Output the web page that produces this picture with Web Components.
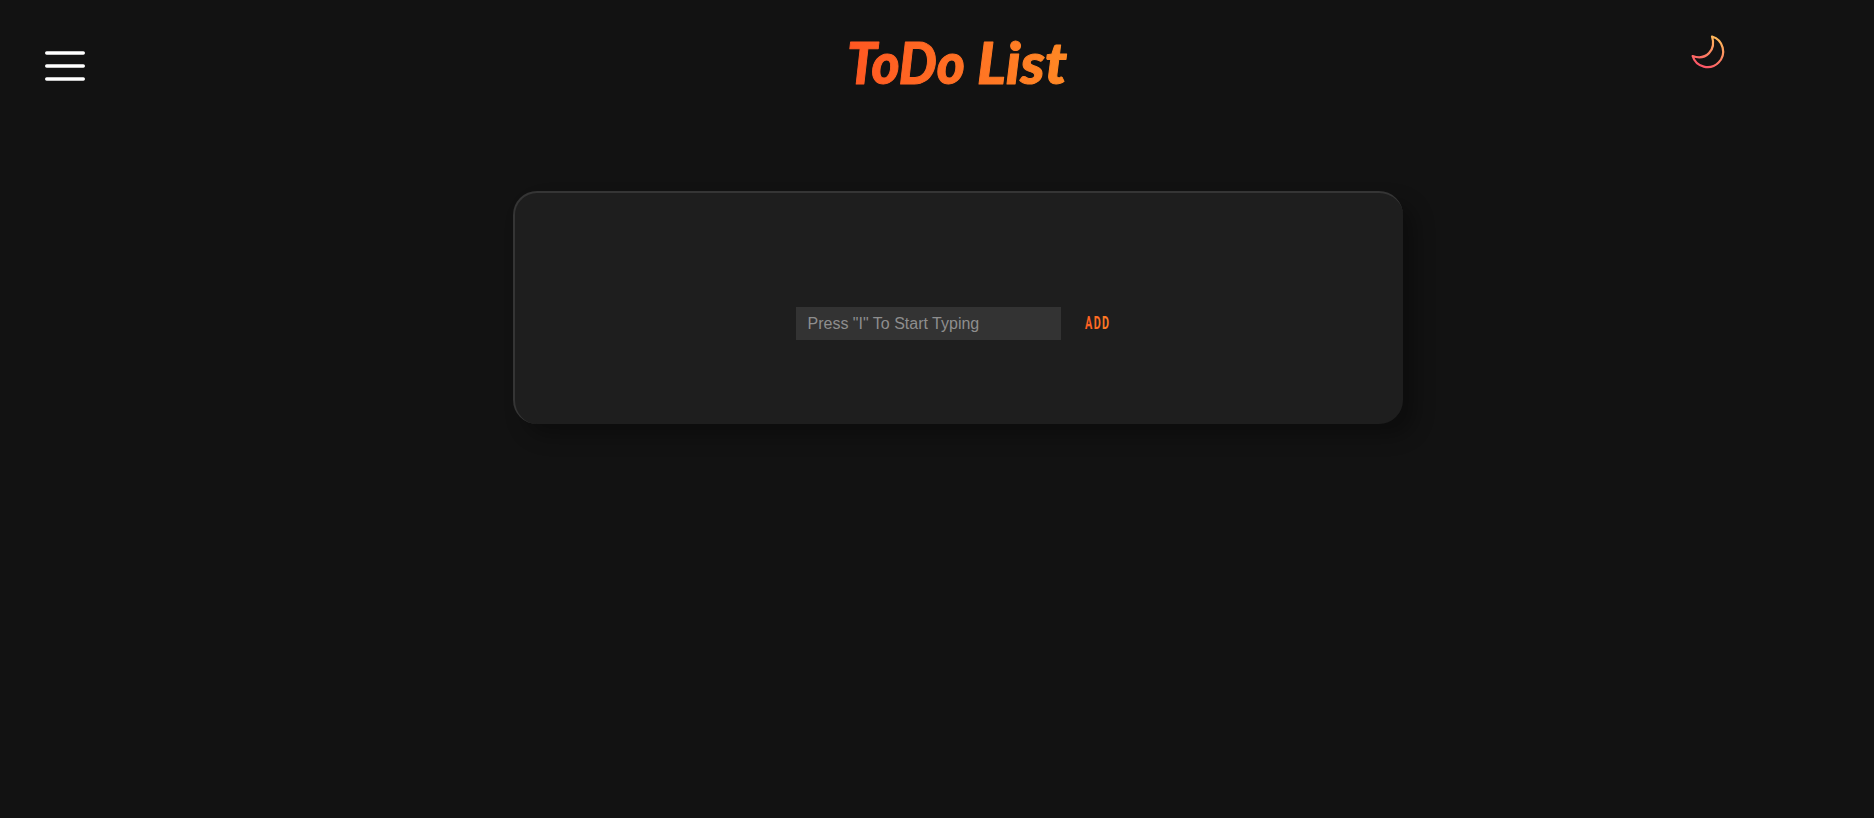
<!DOCTYPE html>
<html lang="en"><head><meta charset="utf-8"><title>ToDo List</title>
<style>html,body{margin:0;height:100%;background:#121212;overflow:hidden}</style></head>
<body><todo-app></todo-app>
<script>
const define = (name, html) => customElements.define(name, class extends HTMLElement {
  constructor() { super(); this.attachShadow({mode:'open'}).innerHTML = html; }
});
define('menu-button', `<style>:host{display:block;width:40px;height:30px}svg{display:block}</style>
<svg width="40" height="30" viewBox="0 0 40 30" stroke="#fff" stroke-width="3.4" stroke-linecap="round"><path d="M1.7 2H38.3M1.7 15H38.3M1.7 28H38.3"/></svg>`);
define('app-title', `<style>:host{display:block;width:218px;height:70px}svg{display:block;overflow:visible}text{font:italic 900 58px Lato,sans-serif;fill:url(#g);stroke:url(#g);stroke-width:1;stroke-linejoin:round}</style>
<svg width="218" height="70"><defs><linearGradient id="g" gradientUnits="userSpaceOnUse" x1="0" y1="0" x2="218" y2="0"><stop stop-color="#ff5722"/><stop offset="1" stop-color="#ff8824"/></linearGradient></defs>
<text y="51"><tspan x="-2" textLength="118" lengthAdjust="spacingAndGlyphs">ToDo</tspan><tspan x="128" textLength="90" lengthAdjust="spacingAndGlyphs">List</tspan></text></svg>`);
define('theme-toggle', `<style>:host{display:block;width:36px;height:36px}svg{display:block}</style>
<svg width="36" height="36" viewBox="0 0 36 36" fill="none"><defs><linearGradient id="m" gradientUnits="userSpaceOnUse" x1="25" y1="1" x2="10" y2="34"><stop stop-color="#ffc05a"/><stop offset="1" stop-color="#fc5068"/></linearGradient></defs>
<path d="M21 2.5A15.6 15.6 0 1 1 1.6 22C15 26.8 25.5 16 21 2.5Z" stroke="url(#m)" stroke-width="2.2" stroke-linejoin="round"/></svg>`);
define('todo-card', `<style>:host{display:flex;box-sizing:border-box;width:890px;height:233px;padding-top:114px;padding-left:281px;border:solid #353535;border-width:2px 0 0 2px;border-radius:24px;background:#1e1e1e;box-shadow:12px 12px 20px rgba(0,0,0,.3);align-items:flex-start}</style><slot></slot>`);
define('todo-input', `<style>:host{display:block}input{display:block;box-sizing:border-box;width:265px;height:33px;border:0;border-radius:0;background:#333;color:#eee;padding:0 11.5px;font:16px "Liberation Sans",Arial,sans-serif;outline:0}input::placeholder{color:#8e8e8e;opacity:1}</style><input placeholder='Press "I" To Start Typing'>`);
define('add-button', `<style>:host{display:block;margin-left:24px;height:33px}svg{display:block;overflow:visible}text{font:700 18.5px Roboto,sans-serif;fill:url(#a)}</style>
<svg width="28" height="33"><defs><linearGradient id="a" gradientUnits="userSpaceOnUse" x1="0" y1="0" x2="25" y2="0"><stop stop-color="#ff5c22"/><stop offset="1" stop-color="#ff8024"/></linearGradient></defs><text y="22" textLength="25.5" lengthAdjust="spacingAndGlyphs" letter-spacing="2.4">ADD</text></svg>`);
define('todo-app', `<style>:host{display:flex;flex-direction:column;box-sizing:border-box;height:818px;background:#121212}
header{display:grid;grid-template-columns:40px 218px 36px;column-gap:0;height:191px;align-items:start;padding-left:45px}
header{grid-template-columns:804px 218px 624px 1fr}menu-button{grid-column:1;margin-top:51px}app-title{grid-column:2;margin-top:33px}theme-toggle{grid-column:4;margin-top:34px}
main{padding-left:513px}</style>
<header><menu-button></menu-button><app-title></app-title><theme-toggle></theme-toggle></header>
<main><todo-card><todo-input></todo-input><add-button></add-button></todo-card></main>`);
</script></body></html>
